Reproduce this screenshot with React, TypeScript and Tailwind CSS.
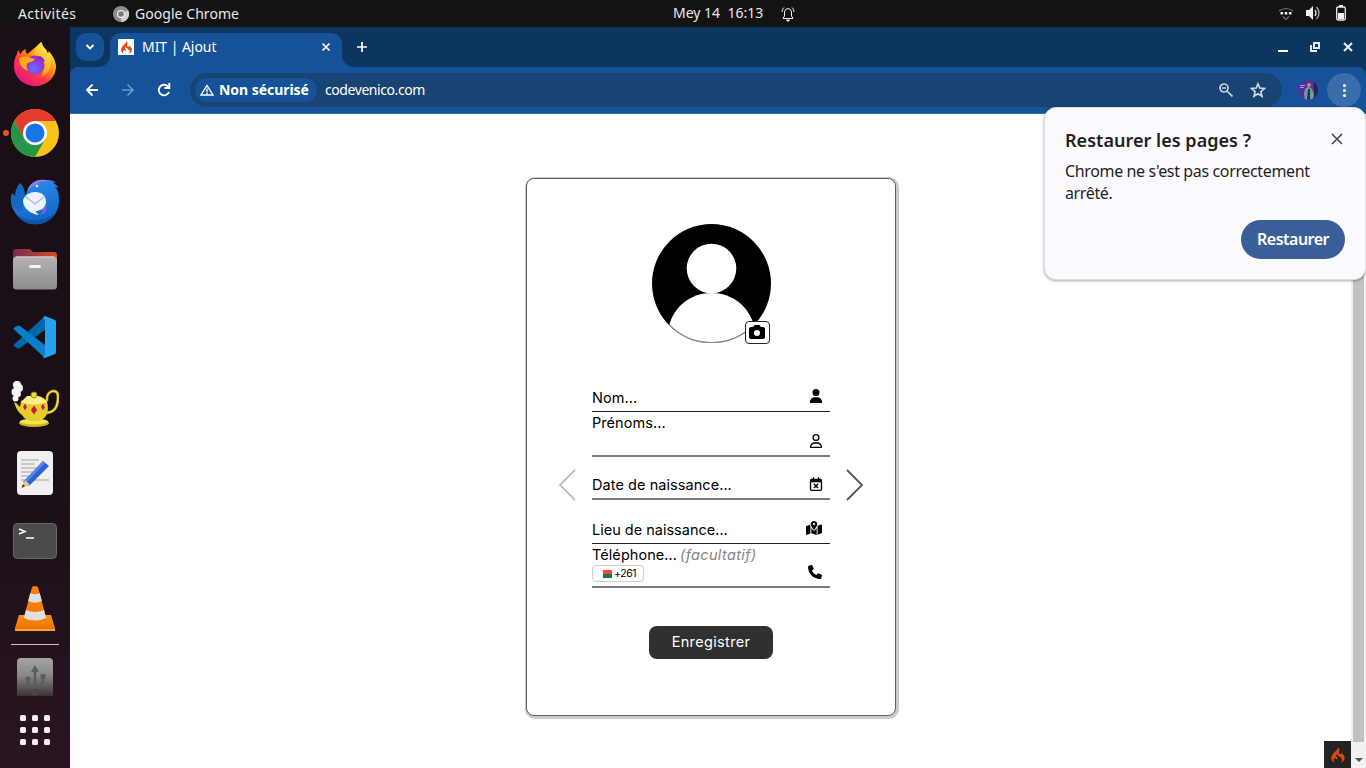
import React from "react";
import { FaUser, FaRegUser, FaRegCalendarXmark, FaMapLocationDot, FaPhone, FaCamera } from "react-icons/fa6";
import { SiCodeigniter } from "react-icons/si";

const ui = "font-['Noto_Sans',sans-serif]";

function Firefox() {
  return (
    <svg viewBox="0 0 48 48" className="size-12">
      <defs>
        <linearGradient id="ffA" x1="0.85" y1="0.1" x2="0.2" y2="0.95">
          <stop offset="0" stopColor="#fff44f" />
          <stop offset="0.35" stopColor="#ff980e" />
          <stop offset="0.65" stopColor="#ff3647" />
          <stop offset="1" stopColor="#e31587" />
        </linearGradient>
        <linearGradient id="ffB" x1="0.8" y1="0" x2="0.3" y2="1">
          <stop offset="0" stopColor="#fff44f" />
          <stop offset="1" stopColor="#ff8a16" />
        </linearGradient>
        <radialGradient id="ffC" cx="0.45" cy="0.7">
          <stop offset="0" stopColor="#6173ff" />
          <stop offset="1" stopColor="#9b2fd0" />
        </radialGradient>
      </defs>
      <path d="M6 13c0-2 1-3 2-4 0 2 .5 3 1.500 4 1-2 4-5 5-5 0 2 0 4 2 5l14-12c1 4 3 6 5 8l1 4c1-1 1-2 1-3 4 4 7 9 7.500 15C45 37 35.500 45 24 45S3 36 3 25c0-5 1-9 3-12z" fill="url(#ffA)" />
      <path d="M30 1c1 6 6 8 8 13 5 10-1 20-8 22 4-7 4-16-1-20-3-2-5-1-6-3 0-4 4-9 7-12z" fill="url(#ffB)" />
      <circle cx="24" cy="24" r="9.500" fill="url(#ffC)" />
      <path d="M8 18c3-3 7-3 9-2 3 1 6 2 7 2-1 3-7 3-8 5-1 3 0 5 1 7-5-2-9-7-9-12z" fill="#ffad19" />
      <path d="M29 15c3 1 4 3 5 6l-3-2c-2-1-4-2-6-2z" fill="#6b35d0" />
    </svg>
  );
}

function Chrome() {
  return (
    <svg viewBox="0 0 48 48" className="size-12">
      <circle cx="24" cy="24" r="24" fill="#fbc116" />
      <path d="M3.200 12A24 24 0 0 1 44.800 12H24L13.600 30z" fill="#e33b2e" />
      <path d="M3.200 12A24 24 0 0 0 24 48L34.400 30 24 34 13.600 30z" fill="#269547" />
      <circle cx="24" cy="24" r="12" fill="#fff" />
      <circle cx="24" cy="24" r="9.500" fill="#1a73e8" />
    </svg>
  );
}

function Thunderbird() {
  return (
    <svg viewBox="0 0 48 48" className="size-12">
      <defs>
        <linearGradient id="tb" x1="0.3" y1="0" x2="0.6" y2="1">
          <stop offset="0" stopColor="#2b8df0" />
          <stop offset="1" stopColor="#1162c4" />
        </linearGradient>
      </defs>
      <path d="M9 6c4 3 5 8 5 14-1 8-3 11-1 15L5 36C-1 30-1 21 1 16l3 3c0-5 2-10 5-13z" fill="#1467c5" />
      <path d="M16 15c2-9 10-13 18-12 4 0 8 1 11 2l-3 1c3 2 5 3 5 5l-3-1c4 4 4 9 4 14C48 38 37 47 25 47 13 47 4 40 1 28c3 4 6 6 10 6 0-8 2-14 5-19z" fill="url(#tb)" />
      <path d="M16 15c3-9 9-13 18-12l9 1c-9 0-13 0-17 3-4 2-7 4-10 8z" fill="#8c7de8" />
      <circle cx="26" cy="9" r="1.300" fill="#d9efff" />
      <path d="M35 29c2 4 0 8-6 9 3-3 2-5 2-8z" fill="#6c66e4" />
      <path d="M12 23c2-5 7-8 12-8 7 0 11 4 11 10 0 5-5 9-10 9 0 2 2 3 3 4-8-1-16-6-16-15z" fill="#eaf3fc" />
      <path d="m14 19 10 8 10-8" fill="none" stroke="#9fb9d8" strokeWidth="1.200" />
      <path d="M6 38c10 7 27 7 38-2-8 15-30 15-38 2z" fill="#0d55ab" />
    </svg>
  );
}

function Files() {
  return (
    <svg viewBox="0 0 48 48" className="size-12">
      <defs>
        <linearGradient id="flA"><stop stopColor="#782a51" /><stop offset="1" stopColor="#d64e22" /></linearGradient>
        <linearGradient id="flB" x1="0" y1="0" x2="0" y2="1"><stop stopColor="#b3b3b3" /><stop offset="1" stopColor="#8c8c8c" /></linearGradient>
      </defs>
      <path d="M2 18V7q0-3 3-3h14l3 3h21q3 0 3 3v12H2z" fill="url(#flA)" />
      <rect x="2" y="11.500" width="44" height="33" rx="3.500" fill="url(#flB)" />
      <path d="M5 12h38" stroke="#d8d8d8" />
      <rect x="18" y="20" width="12" height="3" rx="1.500" fill="#f5f5f5" />
    </svg>
  );
}

function VsCode() {
  return (
    <svg viewBox="0 0 48 48" className="size-12">
      <path d="M3 31.500 34 3v14L9 35q-2 1-3 0l-3-2q-1-.8 0-1.500z" fill="#0065a9" />
      <path d="M3 16.500q-1-.9 0-1.700L6 13q1-1 3 0l25 19v13z" fill="#0b7fca" />
      <path d="m34 3 10 4q1 .5 1 2v30q0 1.500-1 2l-10 4q-1 0-2-1l2-2V7l-2-2q1-2 2-2z" fill="#24a2ee" />
    </svg>
  );
}

function Lamp() {
  return (
    <svg viewBox="0 0 48 48" className="size-12">
      <g fill="none" strokeLinecap="round">
        <path d="M36 19c-1-10 11-12 11-4 0 11-3 16-12 17" stroke="#9a8710" strokeWidth="3" />
        <path d="M36 19c-1-10 11-12 11-4 0 11-3 16-12 17" stroke="#f4e13c" strokeWidth="1.700" />
      </g>
      <ellipse cx="23" cy="42" rx="15" ry="4" fill="#cdb81b" />
      <ellipse cx="23" cy="40.500" rx="14" ry="3" fill="#f5e44b" />
      <path d="M3 21q3 1 6 5l1-6q13-6 26 0 4 18-10 20-11 1-15-6Q6 31 3 21z" fill="#e4cf29" />
      <path d="M10 21q13 5 26 0-3-5-9-6H16z" fill="#faf083" />
      <circle cx="23" cy="14" r="3" fill="#ead54c" stroke="#9e8815" />
      <g fill="#c61b31" stroke="#fff09a" strokeWidth=".4">
        <path d="m14 22 2.200 4-2.200 4-2.200-4zM23 24l3.500 5-3.500 5-3.500-5zM32 22l2.200 4-2.200 4-2.200-4z" />
      </g>
      <g fill="#f4f4f4">
        <circle cx="6" cy="4" r="4.200" /><circle cx="8" cy="7" r="4" /><circle cx="4.500" cy="11" r="4" />
        <circle cx="7" cy="13" r="3" /><circle cx="4.500" cy="17.500" r="3" />
      </g>
    </svg>
  );
}

function TextEditor() {
  return (
    <svg viewBox="0 0 48 48" className="size-12">
      <rect x="6" y="2" width="36" height="44" rx="4" fill="#f0f0f0" />
      <path d="M10 11h18M10 15h14M10 19h18M10 23h16M10 27h12M10 31h28" stroke="#bdbab0" strokeWidth="1.500" />
      <path d="M12 33 32 12l6 5-20 20z" fill="#2f61d5" />
      <path d="m14 31 18-19 2 2-18 19z" fill="#5488ef" />
      <path d="m14 31 5 5-8 3z" fill="#f3c18c" />
      <path d="m12 35 2 2-3.500 2z" fill="#333" />
    </svg>
  );
}

function Terminal() {
  return (
    <svg viewBox="0 0 48 48" className="size-12">
      <rect x="2.500" y="6.500" width="43" height="35" rx="4" fill="#4b4b4b" stroke="#696969" />
      <path d="m8 12 6 2.500L8 17" fill="none" stroke="#fff" strokeWidth="1.500" />
      <path d="M15 21h8" stroke="#fff" strokeWidth="1.500" />
    </svg>
  );
}

function Vlc() {
  return (
    <svg viewBox="0 0 48 48" className="size-12">
      <defs>
        <linearGradient id="vl" x1="0" y1="0" x2="0" y2="1"><stop stopColor="#ff9514" /><stop offset="1" stopColor="#e86b00" /></linearGradient>
      </defs>
      <path d="M8 30h32l4 13v3H4v-3z" fill="url(#vl)" />
      <path d="M4 44h40v2H4z" fill="#ffa42c" />
      <path d="M21 2q3-2 6 0l9 34q-12 6-24 0z" fill="#f57d0a" />
      <path d="M19.300 8q4.700 2.500 9.400 0l2.200 8q-7 3.500-13.800 0zM15 25q9 4 18 0l2.200 8q-11 5-22.400 0z" fill="#dde1e4" />
    </svg>
  );
}

function Usb() {
  return (
    <svg viewBox="0 0 36 38" className="h-[38px] w-9">
      <defs>
        <linearGradient id="us" x1="0" y1="0" x2="0" y2="1">
          <stop stopColor="#a3a3a3" /><stop offset="0.45" stopColor="#8a8989" /><stop offset="1" stopColor="#3c3036" />
        </linearGradient>
      </defs>
      <path d="M0 38V4q0-4 4-4h28q4 0 4 4v34z" fill="url(#us)" />
      <g fill="none" stroke="#5f5c5e" strokeWidth="2.500">
        <path d="M18 12v24M11 21v3q0 5 7 7M26 19v3q0 6-8 8" />
      </g>
      <path d="m18 7 4 7h-8z" fill="#5f5c5e" />
      <circle cx="11" cy="21" r="2.500" fill="#5f5c5e" />
      <rect x="23.500" y="16" width="5" height="5" fill="#5f5c5e" />
      <circle cx="18" cy="34" r="3.500" fill="#4b464a" />
    </svg>
  );
}

function TopBar() {
  return (
    <header className={`flex h-[27px] shrink-0 items-center bg-[#131313] text-[14px] text-[#e8e8e8] ${ui}`}>
      <div className="flex w-[673px] items-center pl-[18px]">
        <span className="w-[95px] pb-px tracking-[0.4px]">Activités</span>
        <svg viewBox="0 0 16 16" className="mr-[6px] size-4">
          <circle cx="8" cy="8" r="8" fill="#8d8d8d" />
          <path d="M8 8 15 4a8 8 0 0 1-7 12z" fill="#d0d0d0" />
          <circle cx="8" cy="8" r="4" fill="#eee" />
          <circle cx="8" cy="8" r="2.800" fill="#777" />
        </svg>
        <span className="pb-px tracking-[0.05px] whitespace-nowrap">Google Chrome</span>
      </div>
      <span className="w-[108px] pb-[2px] whitespace-pre">Mey 14  16:13</span>
      <svg viewBox="0 0 14 16" className="h-4 w-3.5" fill="none" stroke="#eee">
        <path d="M2 12.500h10L10.500 10V6Q10 2.500 7 2.500T3.500 6v4zM1 6q0-3 2-4.500M13 6q0-3-2-4.500" />
        <path d="M5.500 14h3l-1.500 1.500z" fill="#eee" />
      </svg>
      <div className="ml-auto flex items-center pr-5">
        <svg viewBox="0 0 16 14" className="mr-[11px] h-3.5 w-4">
          <path d="M1 4Q8-1 15 4M5 9.500l3 3 3-3" fill="none" stroke="#777" strokeWidth="1.200" />
          <path d="M2.500 5h2.600v2.600H2.500zM6.700 5h2.600v2.600H6.700zM10.900 5h2.600v2.600h-2.600z" fill="#eee" />
        </svg>
        <svg viewBox="0 0 16 16" className="mr-[15px] mb-px size-4">
          <path d="M1 5h3l4-4v14l-4-4H1z" fill="#f2f2f2" />
          <path d="M10 5q2 3 0 6" fill="none" stroke="#eee" strokeWidth="1.300" />
          <path d="M11.500 2q5 6 0 12" fill="none" stroke="#aaa" strokeWidth="1.300" />
        </svg>
        <svg viewBox="0 0 10 16" className="mb-[2px] h-4 w-2.5">
          <path d="M3 0h4v2H3z" fill="#eee" />
          <rect x=".7" y="2" width="8.600" height="13" rx="1.500" fill="none" stroke="#eee" strokeWidth="1.300" />
          <path d="M2 8h6v6H2z" fill="#f4f4f4" />
        </svg>
      </div>
    </header>
  );
}

function Dock() {
  const apps = [Firefox, Chrome, Thunderbird, Files, VsCode, Lamp, TextEditor, Terminal, Vlc];
  return (
    <nav className="flex w-[70px] shrink-0 flex-col items-center bg-linear-to-b from-[#1a0f16] from-60% to-[#2a1523] pt-1">
      {apps.map((Icon, i) => (
        <div key={i} className="relative flex h-[68px] w-full shrink-0 items-center justify-center">
          {i === 1 && <span className="absolute top-[31px] left-[3px] size-1.5 rounded-full bg-[#e95420]" />}
          <Icon />
        </div>
      ))}
      <div className="mt-px h-px w-12 shrink-0 bg-[#c9c5c7]" />
      <div className="mt-[13px] h-[38px]"><Usb /></div>
      <div className="mt-[19px] grid grid-cols-3 gap-1.5">
        {Array.from({ length: 9 }, (_, i) => <span key={i} className="size-1.5 rounded-[1.500px] bg-[#f2f0ee]" />)}
      </div>
    </nav>
  );
}

function TabStrip() {
  return (
    <div className="flex h-10 shrink-0 bg-[#0c3560] text-white">
      <div className="flex w-[284px] bg-[#155299]">
        <div className="w-10 rounded-br-[12px] bg-[#0c3560] pt-1.5 pl-1.5">
          <div className="flex size-7 items-center justify-center rounded-[10px] bg-[#155299]">
            <svg viewBox="0 0 10 8" className="h-2 w-2.5" fill="none" stroke="#fff" strokeWidth="1.800"><path d="m1.500 2 3.500 3.500L8.500 2" /></svg>
          </div>
        </div>
        <div className="w-[232px] bg-[#0c3560] pt-1.5">
          <div className="flex h-[34px] items-center rounded-t-[11px] bg-[#155299] pb-[6px] pl-2">
            <span className="flex size-4 items-center justify-center bg-white"><SiCodeigniter className="size-[13px] text-[#dd4814]" /></span>
            <span className={`ml-2 pb-[2px] text-[14px] tracking-[-0.05px] whitespace-nowrap ${ui}`}>MIT | Ajout</span>
            <svg viewBox="0 0 10 10" className="mr-[11px] ml-auto size-2.5" stroke="#fff" strokeWidth="1.700"><path d="m1.500 1.500 7 7m0-7-7 7" /></svg>
          </div>
        </div>
        <div className="w-3 rounded-bl-[12px] bg-[#0c3560]" />
      </div>
      <svg viewBox="0 0 12 12" className="mt-[14px] ml-[2px] size-3" stroke="#fff" strokeWidth="1.700"><path d="M6 1v10M1 6h10" /></svg>
      <div className="mt-[14px] mr-[13px] ml-auto flex h-3">
        <svg viewBox="0 0 10 12" className="mr-[22px] h-3 w-2.5"><path d="M0 9h10v2H0z" fill="#fff" /></svg>
        <svg viewBox="0 0 10 10" className="mt-px mr-[23px] size-2.5" fill="none" stroke="#e8eef5" strokeWidth="1.900"><path d="M4 1h5v5H4zM1 3v6h6" /></svg>
        <svg viewBox="0 0 10 10" className="mt-px size-2.5" stroke="#e8eef5" strokeWidth="2"><path d="m1 1 8 8m0-8L1 9" /></svg>
      </div>
    </div>
  );
}

function Toolbar() {
  return (
    <div className="flex h-[47px] shrink-0 bg-[#0c3560]">
      <div className={`flex w-full items-center rounded-tl-[8px] rounded-tr-[8px] border-b border-[#3c70ae] bg-[#155299] pl-[15px] text-[14px] text-white ${ui}`}>
        <svg viewBox="0 0 14 14" className="size-3.5" fill="none" stroke="#fff" strokeWidth="1.900"><path d="M13 7H2m5.500-5.500L2 7l5.500 5.500" /></svg>
        <svg viewBox="0 0 14 14" className="ml-[22px] size-3.5" fill="none" stroke="#6d96c5" strokeWidth="1.700"><path d="M1 7h11M6.500 1.500 12 7l-5.500 5.500" /></svg>
        <svg viewBox="0 0 14 14" className="ml-[22px] size-3.5" fill="none" stroke="#fff" strokeWidth="1.900"><path d="M12 9A5.300 5.300 0 1 1 10.800 3.300L12 4.500M12.300 0v5H7.500" /></svg>
        <div className="ml-[19px] flex h-[34px] w-[1092px] items-center rounded-full bg-[#194372] px-[5px]">
          <div className="flex h-6 w-[122px] shrink-0 items-center rounded-full bg-[#155299] pl-[5px]">
            <svg viewBox="0 0 14 12" className="mr-[5px] h-3 w-3.5" fill="none" stroke="#fff" strokeWidth="1.400"><path d="M7 1.500 13 11H1zM7 4.500v3.300M7 8.600V10" /></svg>
            <span className="pb-[2px] text-[14px] font-bold tracking-[-0.05px] whitespace-nowrap">Non sécurisé</span>
          </div>
          <span className="ml-2 pb-[2px] tracking-[-0.43px]">codevenico.com</span>
          <svg viewBox="0 0 14 14" className="mr-[17px] ml-auto size-3.5 shrink-0" fill="none" stroke="#c5d3e3" strokeWidth="1.700"><circle cx="5" cy="5" r="4" /><path d="m8 8 5.500 5.500M3 5h4" /></svg>
          <svg viewBox="0 0 16 16" className="mr-[11px] size-4 shrink-0" fill="none" stroke="#d0dbe8" strokeWidth="1.600"><path d="m8 1.800 1.800 4.300 4.700.4-3.600 3.100 1.100 4.600L8 11.700l-4 2.500 1.100-4.600-3.600-3.100 4.700-.4z" /></svg>
        </div>
        <svg viewBox="0 0 20 20" className="ml-4 size-5 shrink-0">
          <defs><clipPath id="av"><circle cx="10" cy="10" r="10" /></clipPath></defs>
          <g clipPath="url(#av)">
            <path d="M0 0h20v20H0z" fill="#533096" /><path d="M16 0h4v20h-4z" fill="#302052" />
            <path d="M2 5h5v1H2zM2 7h4v1H2z" fill="#b492df" />
            <path d="M7 9q3-4 7 0l2 5-1 6H7L6 14z" fill="#6f9aa5" /><circle cx="11" cy="5" r="2" fill="#bc8e77" />
            <path d="M10 9h2v11h-3z" fill="#213344" /><path d="m0 13 5 7H0z" fill="#d44170" />
          </g>
        </svg>
        <div className="ml-[9px] flex size-[34px] shrink-0 flex-col items-center justify-center gap-[2px] rounded-full bg-[#3b6daa]">
          <span className="size-[3px] rounded-full bg-white" /><span className="size-[3px] rounded-full bg-white" /><span className="size-[3px] rounded-full bg-white" />
        </div>
      </div>
    </div>
  );
}

function Avatar() {
  return (
    <div className="relative mt-[45px] size-[119px]">
      <svg viewBox="0 0 119 119" className="size-full">
        <defs><clipPath id="face"><circle cx="59.500" cy="59.500" r="59.500" /></clipPath></defs>
        <g clipPath="url(#face)">
          <path d="M0 0h119v119H0z" fill="#000" />
          <circle cx="59.500" cy="44.500" r="24.800" fill="#fff" />
          <path d="M17 102C22 82 39 69 59.500 69S97 82 102 102v17H17z" fill="#fff" />
        </g>
        <path d="M17.500 101a59 59 0 0 0 84 0" fill="none" stroke="#8a8a8a" strokeWidth="1.200" />
      </svg>
      <span className="absolute top-[97px] left-[93px] flex h-[23px] w-[25px] items-center justify-center rounded-[4px] border border-[#222] bg-white">
        <FaCamera className="mb-px size-4 text-black" />
      </span>
    </div>
  );
}

function FormCard() {
  return (
    <section className="mt-16 ml-[67px] flex h-[538px] w-[370px] flex-col items-center rounded-[8px] border border-[#606060] bg-white font-['Inter',sans-serif] text-[14.500px] leading-5 tracking-[0.06px] text-black shadow-[1px_1px_0_2px_#cacaca]">
      <Avatar />
      <div className="mt-[45px] flex w-full items-start justify-between px-[31px]">
        <svg viewBox="0 0 18 32" className="mt-[81px] h-8 w-[18px]" fill="none" stroke="#bfbfbf" strokeWidth="1.800"><path d="M17 1 2 16l15 15" /></svg>
        <div className="flex w-[238px] flex-col">
          <div className="flex h-6 justify-between border-b border-[#222] pr-2">
            <span>Nom...</span>
            <FaUser className="mt-[1px] mr-[-1px] h-3.5 w-3.5" />
          </div>
          <div className="flex h-[45px] justify-between border-b-2 border-[#7c7c7c] pr-2">
            <span className="pt-px">Prénoms...</span>
            <FaRegUser className="mt-[22px] mr-[-1px] size-3.5" />
          </div>
          <div className="flex h-[43px] justify-between border-b-2 border-[#7c7c7c] pt-[18px] pr-2">
            <span>Date de naissance...</span>
            <FaRegCalendarXmark className="mt-[2px] mr-[-1px] size-3.5" />
          </div>
          <div className="flex h-11 justify-between border-b border-[#222] pt-5 pr-2">
            <span className="tracking-normal">Lieu de naissance...</span>
            <FaMapLocationDot className="size-4" />
          </div>
          <div className="flex h-11 justify-between border-b-2 border-[#7c7c7c] pr-2">
            <div>
              <div className="flex h-[21px] pt-px whitespace-nowrap">
                <span>Téléphone...</span>
                <i className="ml-[3px] tracking-[0.35px] text-[#858585]">(facultatif)</i>
              </div>
              <div className="flex h-[17px] w-[52px] items-center rounded-[4px] border border-[#ccc] bg-white pl-[9px] text-[10.500px] leading-none">
                <svg viewBox="0 0 11 8" className="mr-[1px] h-2 w-[11px] shrink-0"><path d="M0 0h3v8H0z" fill="#f5f5f5" /><path d="M1 0h9v4H1z" fill="#fa493b" /><path d="M1 4h9v4H1z" fill="#18783e" /></svg>
                <span className="pt-px tracking-[-0.4px]">+261</span>
              </div>
            </div>
            <FaPhone className="mt-[21px] size-3.5" />
          </div>
        </div>
        <svg viewBox="0 0 18 32" className="mt-[81px] h-8 w-[18px]" fill="none" stroke="#555" strokeWidth="1.800"><path d="m1 1 15 15L1 31" /></svg>
      </div>
      <button className="mt-[38px] flex h-[33px] w-[124px] items-center justify-center rounded-[8px] bg-[#303030] pb-px tracking-[0.35px] text-white">Enregistrer</button>
    </section>
  );
}

function RestoreDialog() {
  return (
    <aside className={`absolute top-[107px] right-0 flex h-[173px] w-[322px] flex-col rounded-[12px] border border-[#dcdde6] bg-[#fdfaff] px-5 text-[#1f1f22] shadow-[0_1px_3px_rgba(0,0,0,0.35)] ${ui}`}>
      <div className="mt-5 flex items-center justify-between">
        <h2 className="text-[18px] leading-[25px] font-semibold tracking-[0.03px] whitespace-nowrap">Restaurer les pages ?</h2>
        <svg viewBox="0 0 12 12" className="mr-0.5 mb-[3px] size-3" stroke="#48484d" strokeWidth="1.600"><path d="m1 1 10 10m0-10L1 11" /></svg>
      </div>
      <p className="mt-[7px] text-[16px] leading-[22px] tracking-[-0.36px] whitespace-nowrap">Chrome ne s'est pas correctement<br />arrêté.</p>
      <button className="mt-4 flex h-[39px] w-[104px] items-center justify-center self-end rounded-full bg-[#3a5f98] pb-[2px] text-[16px] font-semibold tracking-[-0.5px] text-white">Restaurer</button>
    </aside>
  );
}

export default function App() {
  return (
    <div className="relative flex h-[768px] w-[1366px] flex-col overflow-hidden bg-white">
      <TopBar />
      <div className="flex h-[741px]">
        <Dock />
        <main className="flex w-[1296px] flex-col">
          <TabStrip />
          <Toolbar />
          <div className="flex min-h-0 flex-1">
            <div className="flex flex-1 pl-[389px]"><FormCard /></div>
            <div className="flex w-[27px] items-end"><div className="flex size-[27px] items-center justify-center bg-[#232323]"><SiCodeigniter className="size-4 text-[#dd4814]" /></div></div>
            <div className="flex w-[15px] flex-col items-center bg-[#f1f1f1]">
              <div className="h-[628px] w-[11px] bg-[#c1c1c1]" />
              <svg viewBox="0 0 8 4" className="mt-4 h-1 w-2"><path d="M0 0h8L4 4z" fill="#505050" /></svg>
            </div>
          </div>
        </main>
      </div>
      <RestoreDialog />
    </div>
  );
}
